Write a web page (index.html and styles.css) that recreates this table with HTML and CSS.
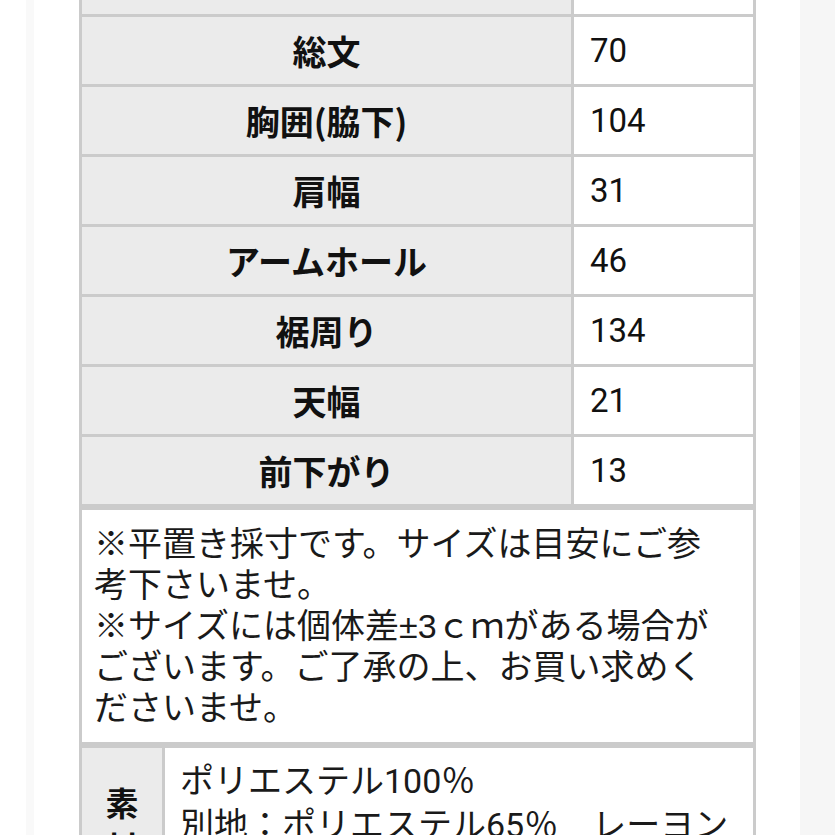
FILE: index.html
```html
<!DOCTYPE html>
<html lang="ja">
<head>
<meta charset="utf-8">
<link rel="stylesheet" href="styles.css">
</head>
<body>
<div class="page">
  <div class="gutter"></div>
  <div class="panel">
    <div class="sizes">
      <div class="row"><div class="label"></div><div class="value"></div></div>
      <div class="row"><div class="label">総文</div><div class="value">70</div></div>
      <div class="row"><div class="label">胸囲(脇下)</div><div class="value">104</div></div>
      <div class="row"><div class="label">肩幅</div><div class="value">31</div></div>
      <div class="row"><div class="label">アームホール</div><div class="value">46</div></div>
      <div class="row"><div class="label">裾周り</div><div class="value">134</div></div>
      <div class="row"><div class="label">天幅</div><div class="value">21</div></div>
      <div class="row"><div class="label">前下がり</div><div class="value">13</div></div>
    </div>
    <div class="note">
      <p>※平置き採寸です。サイズは目安にご参考下さいませ。</p>
      <p>※サイズには個体差±3ｃｍがある場合がございます。ご了承の上、お買い求めくださいませ。</p>
    </div>
    <div class="material">
      <div class="mat-label">素材</div>
      <div class="mat-value">ポリエステル100％<br>別地：ポリエステル65％　レーヨン35％</div>
    </div>
  </div>
  <div class="side"></div>
</div>
</body>
</html>
```

FILE: styles.css
```css
html, body {
  margin: 0;
  padding: 0;
  background: #ffffff;
  overflow: hidden;
}
.page {
  display: flex;
  height: 835px;
  overflow: hidden;
  font-family: "Noto Sans CJK JP", sans-serif;
  color: #111;
}
.gutter {
  width: 26px;
  flex: none;
  background: #ffffff;
  border-right: 8px solid #f9f9f9;
}
.panel {
  width: 721px;
  flex: none;
  background: #ffffff;
  padding-left: 45px;
}
.side {
  flex: 1;
  background: #f6f6f6;
}
.sizes {
  width: 674px;
  margin-top: -53px;
  border-left: 3px solid #cbcbcb;
}
.row {
  display: flex;
  height: 70px;
}
.label {
  width: 489px;
  flex: none;
  background: #ebebeb;
  border-right: 3px solid #cbcbcb;
  border-bottom: 3px solid #cbcbcb;
  display: flex;
  align-items: center;
  justify-content: center;
  font-weight: 700;
  font-size: 34px;
  color: #111;
}
.value {
  width: 163px;
  flex: none;
  padding-left: 16px;
  background: #ffffff;
  border-right: 3px solid #cbcbcb;
  border-bottom: 3px solid #cbcbcb;
  display: flex;
  align-items: center;
  font-family: Roboto, sans-serif;
  font-size: 33px;
  color: #111;
}
.note {
  width: 629px;
  height: 218px;
  padding: 14px 30px 0 12px;
  border: 3px solid #cbcbcb;
  background: #ffffff;
  font-family: "Liberation Sans", "Noto Sans CJK JP", sans-serif;
  font-size: 34px;
  line-height: 41px;
  color: #1a1a1a;
}
.note p {
  margin: 0;
}
.material {
  display: flex;
  width: 674px;
  border-left: 3px solid #cbcbcb;
  border-top: 6px solid #cbcbcb;
  margin-top: -3px;
  height: 200px;
}
.mat-label {
  flex: none;
  box-sizing: border-box;
  width: 83px;
  background: #ebebeb;
  border-right: 3px solid #cbcbcb;
  padding: 32px 22px 0;
  font-weight: 700;
  font-size: 33px;
  line-height: 45px;
  text-align: center;
  color: #111;
}
.mat-value {
  flex: 1;
  border-right: 3px solid #cbcbcb;
  padding: 11px 0 0 15px;
  font-family: Roboto, "Noto Sans CJK JP", sans-serif;
  font-size: 34px;
  line-height: 44px;
  color: #1a1a1a;
}
```
